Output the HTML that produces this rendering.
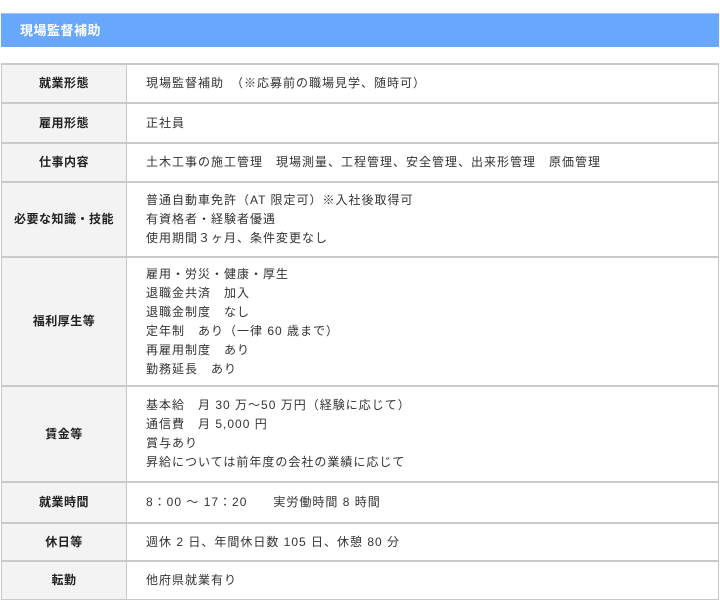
<!DOCTYPE html>
<html><head><meta charset="utf-8"><style>
body{margin:0;background:#fff;width:720px;height:615px;overflow:hidden;font-family:"Liberation Sans","Noto Sans CJK JP",sans-serif;color:#333;}
.h{position:absolute;left:1px;top:13px;width:718px;height:34px;background:#67a8fc;color:#fff;font-size:13px;font-weight:bold;line-height:34px;box-sizing:border-box;padding-left:19px;border-top:1px solid #9cc6fb;letter-spacing:0.5px;}
table{position:absolute;left:1px;top:63px;width:718px;border-collapse:collapse;font-size:12px;line-height:19px;letter-spacing:1px;table-layout:fixed;}
td{border:1px solid #c9c9c9;border-width:2px 1px 1px 1px;padding:0 0 0 19px;vertical-align:middle;}
td.l{width:124px;padding:0;text-align:center;background:#f3f3f3;font-weight:bold;color:#222;letter-spacing:0.5px;}
</style></head><body>
<div class="h">現場監督補助</div>
<table>
<tr><td class="l" style="height:37px">就業形態</td><td>現場監督補助　（※応募前の職場見学、随時可）</td></tr>
<tr><td class="l" style="height:38px">雇用形態</td><td>正社員</td></tr>
<tr><td class="l" style="height:37px">仕事内容</td><td>土木工事の施工管理　現場測量、工程管理、安全管理、出来形管理　原価管理</td></tr>
<tr><td class="l" style="height:73px">必要な知識・技能</td><td>普通自動車免許（AT 限定可）※入社後取得可<br>有資格者・経験者優遇<br>使用期間３ヶ月、条件変更なし</td></tr>
<tr><td class="l" style="height:127px">福利厚生等</td><td>雇用・労災・健康・厚生<br>退職金共済　加入<br>退職金制度　なし<br>定年制　あり（一律 60 歳まで）<br>再雇用制度　あり<br>勤務延長　あり</td></tr>
<tr><td class="l" style="height:94px">賃金等</td><td>基本給　月 30 万～50 万円（経験に応じて）<br>通信費　月 5,000 円<br>賞与あり<br>昇給については前年度の会社の業績に応じて</td></tr>
<tr><td class="l" style="height:39px">就業時間</td><td>8：00 ～ 17：20　　実労働時間 8 時間</td></tr>
<tr><td class="l" style="height:36px">休日等</td><td>週休 2 日、年間休日数 105 日、休憩 80 分</td></tr>
<tr><td class="l" style="height:37px">転勤</td><td>他府県就業有り</td></tr>
</table>
</body></html>
